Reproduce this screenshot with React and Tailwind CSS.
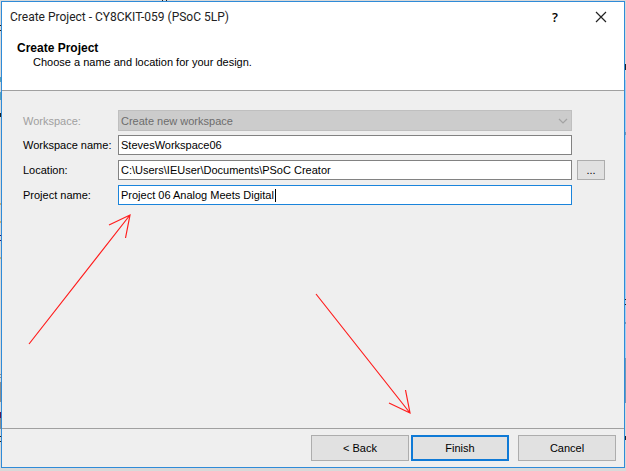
import React from 'react';

const field =
  'h-5 w-full min-w-0 border border-[#828282] bg-white px-[2px] text-[11px] leading-4 text-black outline-none focus:border-[#1a84db]';

function Row({ id, label, muted, children, action }) {
  return (
    <div className="flex items-center">
      <label
        htmlFor={id}
        className={`w-[95px] shrink-0 whitespace-nowrap ${muted ? 'text-[#a0a0a0]' : ''}`}
      >
        {label}
      </label>
      <div className="relative flex min-w-0 flex-1">{children}</div>
      <div className="ml-[5px] flex w-7 shrink-0">{action}</div>
    </div>
  );
}

function TitleBar() {
  return (
    <div className="flex h-[30px] items-center justify-between pl-2 pr-[17px]">
      <h1 className="font-['Roboto',sans-serif] text-xs leading-4 text-[#222]">
        Create Project - CY8CKIT-059 (PSoC 5LP)
      </h1>
      <div className="flex items-center gap-[34px]">
        <button
          type="button"
          aria-label="Help"
          className="w-3 font-['Open_Sans',sans-serif] text-[13px] leading-4 font-semibold"
        >
          ?
        </button>
        <button type="button" aria-label="Close">
          <svg width="12" height="12" viewBox="0 0 12 12" fill="none" stroke="#222" strokeWidth="1.2">
            <path d="M1 1 11 11M11 1 1 11" />
          </svg>
        </button>
      </div>
    </div>
  );
}

/* Hand-drawn hints pointing at the name field and the Finish button. */
function Arrows() {
  return (
    <svg
      className="pointer-events-none absolute top-0 left-0"
      width="626"
      height="471"
      viewBox="0 0 626 471"
      fill="none"
      stroke="#ff1d1d"
      strokeWidth="1.2"
      aria-hidden="true"
    >
      <path d="M29 344 130 215M109 225 130 215 125.500 238" />
      <path d="M316 294 410 413M389 403 410 413 405.500 390" />
    </svg>
  );
}

/* Slivers of the windows that lie behind the dialog. */
function Backdrop() {
  return (
    <svg
      className="pointer-events-none absolute top-0 left-0"
      width="626"
      height="471"
      viewBox="0 0 626 471"
      shapeRendering="crispEdges"
      aria-hidden="true"
    >
      <path fill="#202020" d="M0 25h1v1H0zM0 30h1v1H0zM0 113h1v4H0zM162 0h1v1h-1zM166 0h1v1h-1zM0 436h1v1H0zM0 441h1v1H0z" />
      <path fill="#1b1b78" d="M0 235h1v1H0zM0 240h1v1H0z" />
      <path fill="#5aa0b8" d="M0 77h1v5H0zM0 92h1v8H0z" />
      <path fill="#c8b078" d="M0 203h1v2H0zM0 221h1v2H0zM0 257h1v2H0z" />
      <path fill="#8d8d8d" d="M0 374h1v1H0zM0 377h1v1H0zM0 382h1v20H0zM0 418h1v11H0z" />
      <path fill="#5b1650" d="M0 412h1v6H0z" />
      <path fill="#a8cdec" d="M625 80h1v278h-1z" />
      <path fill="#202020" d="M625 64h1v6h-1zM625 299h1v1h-1zM625 304h1v1h-1zM625 436h1v4h-1z" />
      <path fill="#6f96b5" d="M625 132h1v3h-1zM625 322h1v2h-1zM625 358h1v45h-1z" />
    </svg>
  );
}

const footerButton =
  'h-[26px] w-[98px] bg-[#e1e1e1] text-[11px] leading-4';

export default function App() {
  return (
    <div className="relative flex min-h-screen bg-[#d9d9d9] px-px pt-px pb-[3px] font-['Liberation_Sans',Arial,sans-serif] text-[11px] leading-4 text-black">
      <Backdrop />
      <form
        className="relative flex min-w-0 flex-1 flex-col border border-[#2f8bd8] bg-[#efefef]"
        onSubmit={(e) => e.preventDefault()}
      >
        <header className="h-[89px] border-b border-[#a0a0a0] bg-white">
          <TitleBar />
          <h2 className="mt-2 pl-[15px] text-xs leading-4 font-bold">Create Project</h2>
          <p className="pl-[31px] leading-3">Choose a name and location for your design.</p>
        </header>

        <main className="flex flex-1 flex-col pt-[19px] pr-[19px] pl-[21px]">
          <div className="flex flex-col gap-[5px]">
            <div className="-mb-px">
              <Row id="workspace" label="Workspace:" muted>
                <select
                  id="workspace"
                  disabled
                  className="h-[21px] w-full appearance-none border border-[#bfbfbf] bg-[#cccccc] px-[2px] text-[11px] leading-4 text-[#6d6d6d] opacity-100"
                >
                  <option>Create new workspace</option>
                </select>
                <svg
                  className="pointer-events-none absolute top-2 right-1"
                  width="10"
                  height="6"
                  viewBox="0 0 10 6"
                  fill="none"
                  stroke="#a3a3a3"
                  strokeWidth="1.2"
                  aria-hidden="true"
                >
                  <path d="M1 1 5 5 9 1" />
                </svg>
              </Row>
            </div>
            <Row id="workspace-name" label="Workspace name:">
              <input id="workspace-name" type="text" defaultValue="StevesWorkspace06" className={field} />
            </Row>
            <Row
              id="location"
              label="Location:"
              action={
                <button
                  type="button"
                  aria-label="Browse for location"
                  className="h-5 w-7 border border-[#adadad] bg-[#e1e1e1] leading-4"
                >
                  ...
                </button>
              }
            >
              <input
                id="location"
                type="text"
                defaultValue="C:\Users\IEUser\Documents\PSoC Creator"
                className={field}
              />
            </Row>
            <Row id="project-name" label="Project name:">
              <input
                id="project-name"
                type="text"
                autoFocus
                defaultValue="Project 06 Analog Meets Digital"
                className={`${field} caret-transparent`}
              />
              <span className="absolute top-1 left-[157px] h-[13px] w-px bg-black" />
            </Row>
          </div>
        </main>

        <footer className="flex items-center justify-end border-t border-[#a0a0a0] py-[6px] pr-2">
          <button type="button" className={`${footerButton} border border-[#adadad]`}>
            &lt; Back
          </button>
          <button type="submit" className={`${footerButton} ml-[2px] border-2 border-[#0f7ad6]`}>
            Finish
          </button>
          <button type="button" className={`${footerButton} ml-[9px] border border-[#adadad]`}>
            Cancel
          </button>
        </footer>
      </form>
      <Arrows />
    </div>
  );
}
